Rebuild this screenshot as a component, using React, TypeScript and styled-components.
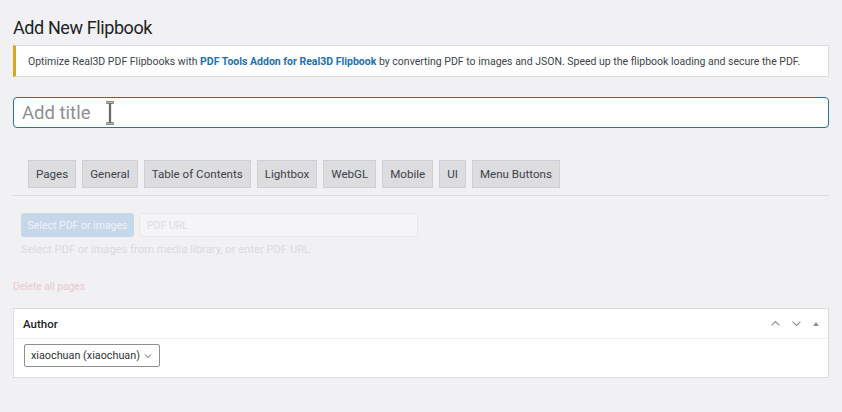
import React from "react";
import styled, { createGlobalStyle } from "styled-components";

const GlobalStyle = createGlobalStyle`
  html, body {
    margin: 0;
    padding: 0;
    background: #f1f0f3;
    font-family: Roboto, "Open Sans", sans-serif;
    color: #1d2327;
  }
`;

const Page = styled.div`
  display: flex;
  flex-direction: column;
  padding: 13px 13px 0 13px;
  width: 816px;
`;

const Heading = styled.h1`
  margin: 0;
  font-size: 18px;
  font-weight: 400;
  letter-spacing: -0.4px;
  line-height: 29px;
  color: #1d2327;
`;

const Notice = styled.div`
  margin-top: 3px;
  height: 32px;
  display: flex;
  align-items: center;
  background: #fff;
  border: 1px solid #dcdcde;
  border-left: 3px solid #dba617;
  padding-left: 12px;
  font-size: 10.5px;
  color: #3c434a;
  white-space: nowrap;
  box-sizing: border-box;

  b {
    color: #2271b1;
    font-weight: 700;
  }
`;

const TitleField = styled.div`
  margin-top: 20px;
  height: 31px;
  box-sizing: border-box;
  border: 1px solid #2271b1;
  border-radius: 4px;
  background: #fff;
  display: flex;
  align-items: center;
  padding-left: 8px;
  gap: 15px;
  font-size: 18.5px;
  color: #8c8f94;
`;

const Cursor = styled.svg`
  width: 10px;
  height: 24px;
`;

const Tabs = styled.div`
  margin-top: 32px;
  display: flex;
  gap: 6px;
  padding-left: 15px;
  padding-bottom: 7px;
  border-bottom: 1px solid #dcdcde;
`;

const Tab = styled.div`
  height: 28px;
  box-sizing: border-box;
  padding: 0 7px;
  display: flex;
  align-items: center;
  background: #dddcdf;
  border: 1px solid #cfced2;
  font-size: 11.6px;
  color: #3c434a;
`;

const Faded = styled.div`
  display: flex;
  flex-direction: column;
  padding: 17px 0 0 8px;
`;

const PdfRow = styled.div`
  display: flex;
  gap: 5px;
`;

const SelectButton = styled.div`
  width: 113px;
  height: 24px;
  border-radius: 3px;
  background: #c6d7ea;
  color: #eef3f9;
  font-size: 10.5px;
  display: flex;
  align-items: center;
  justify-content: center;
`;

const UrlInput = styled.div`
  width: 279px;
  height: 24px;
  box-sizing: border-box;
  border: 1px solid #e8e7ea;
  border-radius: 3px;
  background: #f5f4f6;
  color: #dddce0;
  font-size: 10.5px;
  padding-left: 7px;
  display: flex;
  align-items: center;
`;

const Hint = styled.div`
  margin-top: 6px;
  font-size: 11.2px;
  color: #dcdbdf;
  line-height: 14px;
`;

const DeleteLink = styled.div`
  margin-top: 24px;
  margin-left: -8px;
  font-size: 10.2px;
  color: #e8c9cf;
`;

const Box = styled.div`
  margin-top: 16px;
  background: #fff;
  border: 1px solid #dcdcde;
  display: flex;
  flex-direction: column;
`;

const BoxHeader = styled.div`
  height: 29px;
  display: flex;
  align-items: center;
  justify-content: space-between;
  padding: 0 9px;
  border-bottom: 1px solid #f0f0f1;
  font-size: 11.5px;
  font-weight: 500;
  color: #1d2327;
`;

const Controls = styled.div`
  display: flex;
  align-items: center;
  gap: 8px;
  margin-right: -2px;
`;

const BoxBody = styled.div`
  padding: 5px 10px 10px 10px;
`;

const AuthorSelect = styled.div`
  width: 136px;
  height: 23px;
  box-sizing: border-box;
  border: 1px solid #8c8f94;
  border-radius: 2px;
  display: flex;
  align-items: center;
  justify-content: space-between;
  padding: 0 6px 0 6px;
  font-size: 10.8px;
  color: #2c3338;
`;

const Chevron = ({ up }: { up?: boolean }) => (
  <svg width="13" height="13" viewBox="0 0 20 20">
    <path
      d={up ? "M4 13 L10 7 L16 13" : "M4 7 L10 13 L16 7"}
      fill="none"
      stroke="#8c8f94"
      strokeWidth="1.7"
    />
  </svg>
);

const tabs = [
  "Pages",
  "General",
  "Table of Contents",
  "Lightbox",
  "WebGL",
  "Mobile",
  "UI",
  "Menu Buttons",
];

export default function App() {
  return (
    <>
      <GlobalStyle />
      <Page>
        <Heading>Add New Flipbook</Heading>
        <Notice>
          <span>
            Optimize Real3D PDF Flipbooks with{" "}
            <b>PDF Tools Addon for Real3D Flipbook</b> by converting PDF to
            images and JSON. Speed up the flipbook loading and secure the PDF.
          </span>
        </Notice>
        <TitleField>
          <span>Add title</span>
          <Cursor viewBox="0 0 10 24">
            <path
              d="M1 1.5 H9 M5 1.5 V22.5 M1 22.5 H9"
              fill="none"
              stroke="#222"
              strokeWidth="2.2"
            />
            <path
              d="M1 1.5 H9 M5 1.5 V22.5 M1 22.5 H9"
              fill="none"
              stroke="#eee"
              strokeWidth="0.7"
            />
          </Cursor>
        </TitleField>
        <Tabs>
          {tabs.map((t) => (
            <Tab key={t}>{t}</Tab>
          ))}
        </Tabs>
        <Faded>
          <PdfRow>
            <SelectButton>Select PDF or images</SelectButton>
            <UrlInput>PDF URL</UrlInput>
          </PdfRow>
          <Hint>Select PDF or images from media library, or enter PDF URL</Hint>
          <DeleteLink>Delete all pages</DeleteLink>
        </Faded>
        <Box>
          <BoxHeader>
            <span>Author</span>
            <Controls>
              <Chevron up />
              <Chevron />
              <svg width="10" height="10" viewBox="0 0 10 10">
                <path d="M2 7 L5 3 L8 7 Z" fill="#8c8f94" />
              </svg>
            </Controls>
          </BoxHeader>
          <BoxBody>
            <AuthorSelect>
              <span>xiaochuan (xiaochuan)</span>
              <svg width="10" height="10" viewBox="0 0 20 20">
                <path
                  d="M4 7 L10 13 L16 7"
                  fill="none"
                  stroke="#50575e"
                  strokeWidth="2"
                />
              </svg>
            </AuthorSelect>
          </BoxBody>
        </Box>
      </Page>
    </>
  );
}
